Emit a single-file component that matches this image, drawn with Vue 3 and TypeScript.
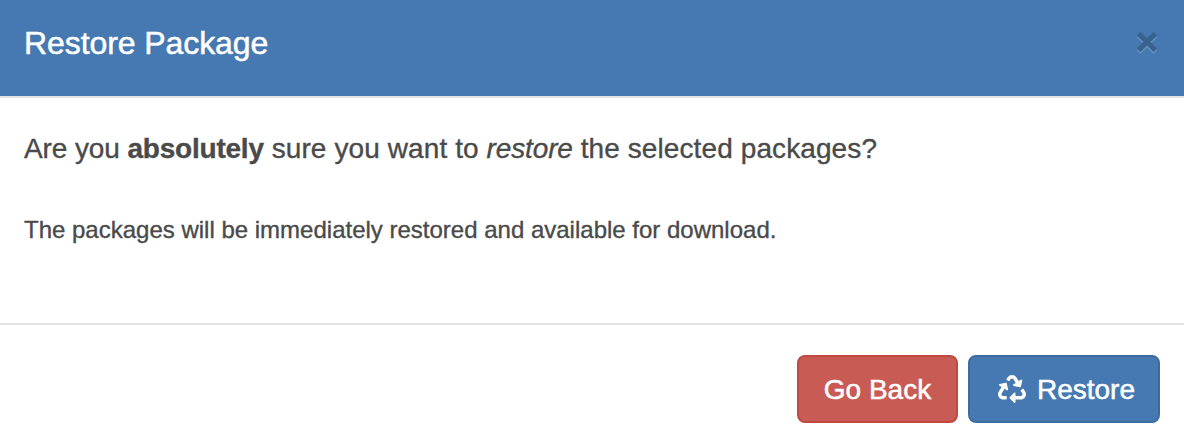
<script setup lang="ts">
const title: string = 'Restore Package'
const details: string = 'The packages will be immediately restored and available for download.'
</script>

<template>
  <section class="modal" role="dialog" aria-labelledby="modal-title">
    <header class="modal-header">
      <h3 id="modal-title" class="title">{{ title }}</h3>
      <button class="close" type="button" aria-label="Close">
        <svg viewBox="0 0 24 24" width="24" height="24">
          <path class="glint" d="M3.7 5.4 20.3 22M20.3 5.4 3.7 22" />
          <path class="cross" d="M3.7 3.7 20.3 20.3M20.3 3.7 3.7 20.3" />
        </svg>
      </button>
    </header>
    <main class="modal-body">
      <p class="question"><span class="lead">Are you </span><strong>absolutely</strong> sure you want to <em>restore</em> the selected packages?</p>
      <p class="details">{{ details }}</p>
    </main>
    <footer class="modal-footer">
      <button class="btn danger" type="button"><span class="label">Go Back</span></button>
      <button class="btn primary" type="button">
        <svg class="recycle" viewBox="0 0 512 512" width="28" height="28" aria-hidden="true">
          <path d="M184.561 261.903c3.232 13.997-12.123 24.635-24.068 17.168l-40.736-25.455-50.867 81.402C55.606 356.273 70.96 384 96.012 384H148c6.627 0 12 5.373 12 12v40c0 6.627-5.373 12-12 12H96.115c-75.334 0-121.302-83.048-81.408-146.88l50.822-81.388-40.725-25.448c-12.081-7.547-8.966-25.961 4.879-29.158l110.237-25.45c8.611-1.988 17.201 3.381 19.189 11.99l25.452 110.237zm98.561-182.915l41.289 66.076-40.74 25.457c-12.051 7.528-9 25.953 4.879 29.158l110.237 25.45c8.672 1.999 17.215-3.438 19.189-11.99l25.45-110.237c3.197-13.844-11.99-24.719-24.068-17.168l-40.687 25.424-41.263-66.082c-37.521-60.033-125.209-60.171-162.816 0l-17.963 28.766c-3.51 5.62-1.8 13.021 3.82 16.533l33.919 21.195c5.62 3.512 13.024 1.803 16.536-3.817l17.961-28.743c12.712-20.341 41.973-19.676 54.257-.022zM497.288 301.12l-27.515-44.065c-3.511-5.623-10.916-7.334-16.538-3.821l-33.861 21.159c-5.62 3.512-7.33 10.915-3.818 16.536l27.564 44.112c13.257 21.211-2.057 48.96-27.136 48.96H320V336.02c0-14.213-17.242-21.383-27.313-11.313l-80 79.981c-6.249 6.248-6.249 16.379 0 22.627l80 79.989C302.689 517.308 320 510.3 320 495.989V448h95.88c75.274 0 121.335-82.997 81.408-146.88z" />
        </svg>
        <span class="label">Restore</span>
      </button>
    </footer>
  </section>
</template>

<style>
body {
  margin: 0;
  background: #fff;
}
</style>

<style scoped>
.modal {
  box-sizing: border-box;
  display: flex;
  flex-direction: column;
  height: 446px;
  overflow: hidden;
  background: #fff;
  color: #4a4a4a;
  font-family: 'Liberation Sans', Arial, sans-serif;
}
.modal-header {
  box-sizing: border-box;
  display: flex;
  justify-content: space-between;
  align-items: flex-start;
  height: 98px;
  padding: 23px 24px 0;
  background: #4679b2;
  border-bottom: 2px solid #e3e3e3;
}
.title {
  margin: 0;
  color: #fff;
  font-size: 32px;
  font-weight: 400;
  line-height: 40px;
  letter-spacing: -0.08px;
  -webkit-text-stroke: 0.5px #fff;
}
.close {
  display: flex;
  margin: 7px 1px 0 0;
  padding: 0;
  border: 0;
  background: none;
}
.close path {
  fill: none;
  stroke-width: 5;
}
.cross {
  stroke: #38618e;
}
.glint {
  stroke: #6b94c1;
}
.modal-body {
  box-sizing: border-box;
  height: 225px;
  padding: 31px 24px 0;
}
.question,
.details {
  margin: 0;
  white-space: nowrap;
  -webkit-text-stroke: 0.35px #4a4a4a;
}
.question {
  font-size: 28px;
  line-height: 40px;
  letter-spacing: 0.1px;
}
.lead {
  letter-spacing: -0.1px;
}
.question strong {
  letter-spacing: -0.22px;
}
.question em {
  letter-spacing: -0.14px;
}
.details {
  margin-top: 44px;
  font-size: 24px;
  line-height: 34px;
}
.modal-footer {
  box-sizing: border-box;
  display: flex;
  justify-content: flex-end;
  gap: 10px;
  height: 123px;
  padding: 30px 24px 0;
  border-top: 2px solid #e3e3e3;
}
.btn {
  box-sizing: border-box;
  display: flex;
  align-items: center;
  justify-content: center;
  height: 68px;
  padding: 0;
  border: 2px solid;
  border-radius: 8px;
  color: #fff;
  font: 28px 'Liberation Sans', Arial, sans-serif;
  -webkit-text-stroke: 0.5px #fff;
}
.label {
  padding-top: 2px;
}
.danger {
  width: 161px;
  background: #c85c55;
  border-color: #c04a42;
}
.primary {
  width: 192px;
  padding-left: 5px;
  gap: 11px;
  background: #4679b2;
  border-color: #3f6ca0;
}
.recycle {
  fill: #fff;
}
</style>
